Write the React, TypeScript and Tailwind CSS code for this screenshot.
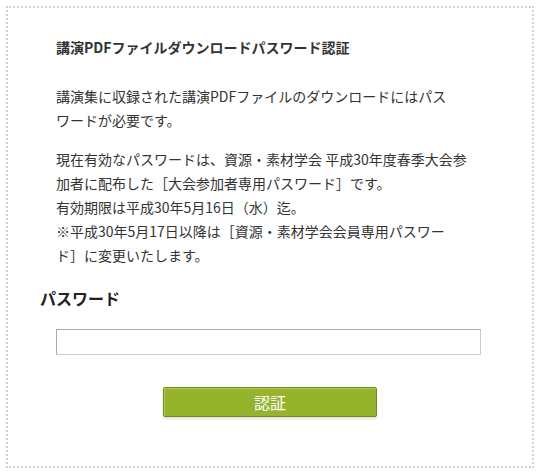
export default function App() {
  return (
    <div className="w-[540px] h-[476px] bg-white p-[6px] font-['Noto_Sans_CJK_JP','Noto_Sans',sans-serif] text-[#333]">
      <div className="h-[462px] border-2 border-dotted border-[#cfcfcf] pt-[28px]">
        {/* 説明 */}
        <div className="pl-[48px] text-[14px] leading-[1.7]">
          <h2 className="font-bold mb-[25px]">講演PDFファイルダウンロードパスワード認証</h2>
          <p className="mb-[16px]">
            講演集に収録された講演PDFファイルのダウンロードにはパス
            <br />
            ワードが必要です。
          </p>
          <p>
            現在有効なパスワードは、資源・素材学会 平成30年度春季大会参
            <br />
            加者に配布した［大会参加者専用パスワード］です。
            <br />
            有効期限は平成30年5月16日（水）迄。
            <br />
            ※平成30年5月17日以降は［資源・素材学会会員専用パスワー
            <br />
            ド］に変更いたします。
          </p>
        </div>

        {/* フォーム */}
        <form className="mt-[19px]" onSubmit={(e) => e.preventDefault()}>
          <h3 className="pl-[32px] text-[16px] leading-[24px] font-bold text-[#222]">パスワード</h3>
          <div className="pl-[48px] mt-[19px]">
            <input
              type="password"
              className="block w-[425px] h-[26px] border border-t-[#a9a9a9] border-l-[#a9a9a9] border-b-[#cccccc] border-r-[#cccccc] bg-white outline-none px-2 text-[14px]"
            />
          </div>
          <div className="flex justify-center mt-[32px]">
            <button
              type="submit"
              className="w-[214px] h-[30px] bg-[#95b42b] border border-[#6f8c1b] rounded-[2px] shadow-[inset_1px_1px_0_#b0ca5a,0_2px_2px_rgba(0,0,0,0.12)] text-white text-[16px] leading-none"
            >
              認証
            </button>
          </div>
        </form>
      </div>
    </div>
  );
}
